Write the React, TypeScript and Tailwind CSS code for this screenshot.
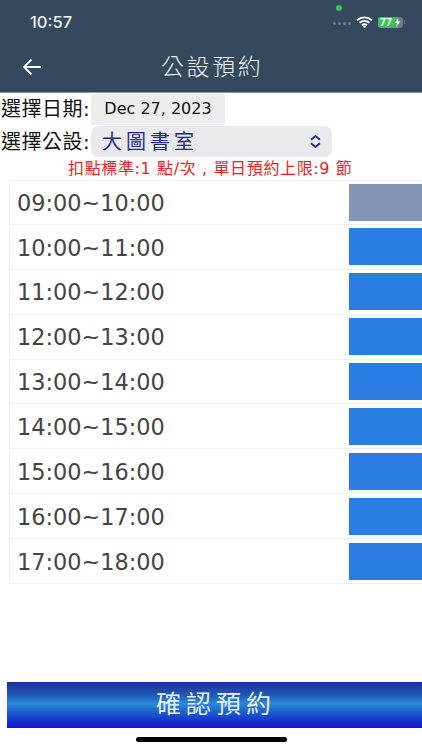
const slots = ["09:00~10:00","10:00~11:00","11:00~12:00","12:00~13:00","13:00~14:00","14:00~15:00","15:00~16:00","16:00~17:00","17:00~18:00"];

export default function App() {
  return (
    <div className="w-[422px] h-[750px] bg-white flex flex-col overflow-hidden relative font-['DejaVu_Sans','Noto_Sans_CJK_TC',sans-serif]">
      <header className="h-[93px] bg-[#34495e] shrink-0 flex flex-col border-b border-[#8a96a3]">
        <div className="h-[44px] flex items-center pl-[30px] pr-[17px] relative">
          <span className="text-[16.5px] font-medium mt-[1px] text-[#f2f4f6] font-['Inter',sans-serif]">10:57</span>
          <div className="ml-auto flex items-center">
            <div className="flex gap-[2px] mr-[5px] mt-[2px]">
              <i className="w-[3px] h-[3px] rounded-full bg-[#6f7e8d]" />
              <i className="w-[3px] h-[3px] rounded-full bg-[#6f7e8d]" />
              <i className="w-[3px] h-[3px] rounded-full bg-[#6f7e8d]" />
              <i className="w-[3px] h-[3px] rounded-full bg-[#6f7e8d]" />
            </div>
            <svg width="17" height="12" viewBox="0 0 17 12" className="mr-[5px]">
              <path d="M1 4.2C5.3 .4 11.7 .4 16 4.2M3.6 6.8c2.9-2.4 6.9-2.4 9.8 0M6 9.2c1.5-1.1 3.5-1.1 5 0" fill="none" stroke="#fff" strokeWidth="1.9" />
              <circle cx="8.5" cy="10.6" r="1.2" fill="#fff" />
            </svg>
            <div className="w-[25px] h-[11px] rounded-[3px] bg-[#6f7c88] flex items-center relative">
              <div className="absolute left-0 top-0 bottom-0 w-[19px] rounded-l-[3px] bg-[#37c25c]" />
              <span className="relative ml-[2px] text-[10px] leading-[11px] font-bold text-white font-['Inter',sans-serif]">77</span>
              <svg width="7" height="9" viewBox="0 0 7 10" className="absolute right-[2px] top-[1px]"><path d="M4.4 0 .6 5.6h2.4L2.4 10l4-6H4z" fill="#fff" /></svg>
            </div>
            <div className="w-[1px] h-[4px] bg-[#6f7c88] ml-[1px]" />
          </div>
          <span className="absolute left-[336px] top-[5px] w-[6px] h-[6px] rounded-full bg-[#2fbf5f]" />
        </div>
        <div className="flex-1 flex items-center relative pb-[3px]">
          <svg width="20" height="18" viewBox="0 0 20 18" className="ml-[22px]">
            <path d="M19 9H2M9.5 1.5 2 9l7.5 7.5" fill="none" stroke="#fff" strokeWidth="1.8" />
          </svg>
          <span className="absolute left-[161px] top-[9px] text-[23px] leading-[28px] tracking-[2.6px] font-light text-[#eef1f4] whitespace-nowrap">公設預約</span>
        </div>
      </header>

      <div className="flex items-center h-[32px] pl-[1px]">
        <span className="text-[20px] tracking-[0.5px] text-[#111] w-[90px] whitespace-nowrap">選擇日期:</span>
        <div className="w-[134px] h-[31px] bg-[#ececec] flex items-center justify-center text-[16px] text-[#111]">Dec 27, 2023</div>
      </div>
      <div className="flex items-center h-[31px] mt-[1px] pl-[1px]">
        <span className="text-[20px] tracking-[0.5px] text-[#111] w-[90px] whitespace-nowrap">選擇公設:</span>
        <div className="w-[241px] h-[31px] rounded-[8px] bg-[#e9e9ee] flex items-center pl-[11px] pr-[9px]">
          <span className="text-[20px] tracking-[4px] text-[#1f2a8c] whitespace-nowrap">大圖書室</span>
          <svg width="15" height="15" viewBox="0 0 15 15" className="ml-auto">
            <path d="M3 5.8 7.5 2 12 5.8M3 9.2 7.5 13 12 9.2" fill="none" stroke="#1f2a8c" strokeWidth="1.8" />
          </svg>
        </div>
      </div>
      <div className="h-[23px] pl-[68px] flex items-center text-[16px] tracking-[0.63px] text-[#ee1c25] whitespace-nowrap">扣點標準:1 點/次 , 單日預約上限:9 節</div>

      <div className="ml-[9px] border-l border-[#f0f0f0] flex flex-col">
        {slots.map((s, i) => (
          <div key={s} className={`h-[44.9px] flex items-center justify-between border-b border-[#efefef] ${i === 0 ? "border-t" : ""}`}>
            <span className="pl-[7px] pt-[3px] text-[22.4px] text-[#444]">{s}</span>
            <div className={`w-[73px] h-[37px] ${i === 0 ? "bg-[#8496b6]" : "bg-[#2a7de1]"}`} />
          </div>
        ))}
      </div>

      <button className="absolute left-[7px] top-[682px] w-[415px] h-[46px] pl-[3px] text-[#e8f0fb] text-[25px] tracking-[5px] bg-[linear-gradient(180deg,#1e2f97_0%,#1f5cb8_30%,#2a8ad9_47%,#1b5fca_65%,#1411cf_100%)]">確認預約</button>
      <div className="absolute left-[136px] top-[737px] w-[151px] h-[5px] rounded-full bg-black" />
    </div>
  );
}
